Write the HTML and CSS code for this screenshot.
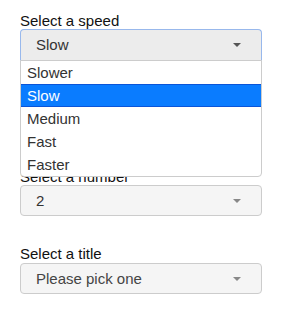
FILE: index.html
```html
<!DOCTYPE html>
<html>
<head>
<meta charset="utf-8">
<link rel="stylesheet" href="styles.css">
</head>
<body>
<div class="page">
  <div class="group group-speed">
    <label class="label">Select a speed</label>
    <div class="select-wrap">
      <div class="select select-open">
        <span class="value">Slow</span>
        <svg class="caret" width="8" height="4" viewBox="0 0 8 4"><polygon points="0,0 8,0 4,4" fill="#555"/></svg>
      </div>
      <div class="dropdown">
        <div class="option">Slower</div>
        <div class="option active">Slow</div>
        <div class="option">Medium</div>
        <div class="option">Fast</div>
        <div class="option">Faster</div>
      </div>
    </div>
  </div>
  <div class="group group-number">
    <label class="label">Select a number</label>
    <div class="select">
      <span class="value">2</span>
      <svg class="caret" width="8" height="4" viewBox="0 0 8 4"><polygon points="0,0 8,0 4,4" fill="#888"/></svg>
    </div>
  </div>
  <div class="group group-title">
    <label class="label">Select a title</label>
    <div class="select">
      <span class="value placeholder">Please pick one</span>
      <svg class="caret" width="8" height="4" viewBox="0 0 8 4"><polygon points="0,0 8,0 4,4" fill="#888"/></svg>
    </div>
  </div>
</div>
</body>
</html>
```
FILE: styles.css
```css
html, body {
  margin: 0;
  padding: 0;
  background: #fff;
}
body {
  font-family: "Liberation Sans", Arial, sans-serif;
  font-size: 15px;
  color: #333;
}
.page {
  padding: 13px 0 0 20px;
  width: 242px;
  display: flex;
  flex-direction: column;
}
.group {
  display: flex;
  flex-direction: column;
}
.group-number {
  margin-top: 108px;
}
.group-title {
  margin-top: 30px;
}
.label {
  display: block;
  line-height: 16px;
  height: 16px;
  color: #111;
}
.group-title .label {
  margin-bottom: 1px;
}
.select-wrap {
  position: relative;
}
.select {
  box-sizing: border-box;
  height: 31px;
  border: 1px solid #ccc;
  border-radius: 4px;
  background: #f5f5f5;
  display: flex;
  align-items: center;
  padding: 0 20px 0 15px;
  line-height: 16px;
}
.select-open {
  height: 32px;
  background: #ececec;
  border-color: #98b8ec;
  border-bottom-color: #c6cfdc;
  border-radius: 4px 4px 0 0;
}
.value {
  flex: 1;
  color: #333;
}
.placeholder {
  color: #444;
}
.caret {
  display: block;
}
.dropdown {
  position: absolute;
  top: 100%;
  left: 0;
  right: 0;
  margin-top: -1px;
  box-sizing: border-box;
  background: #fff;
  border: 1px solid #ccc;
  border-radius: 0 0 4px 4px;
  z-index: 10;
}
.option {
  height: 23px;
  line-height: 16px;
  padding: 4px 6px 3px 6px;
  box-sizing: border-box;
  color: #333;
}
.option.active {
  background: #0a7cff;
  color: #fff;
  box-shadow: inset 0 1px 0 #0b55d8, inset 0 -1px 0 #0b55d8;
}
```
